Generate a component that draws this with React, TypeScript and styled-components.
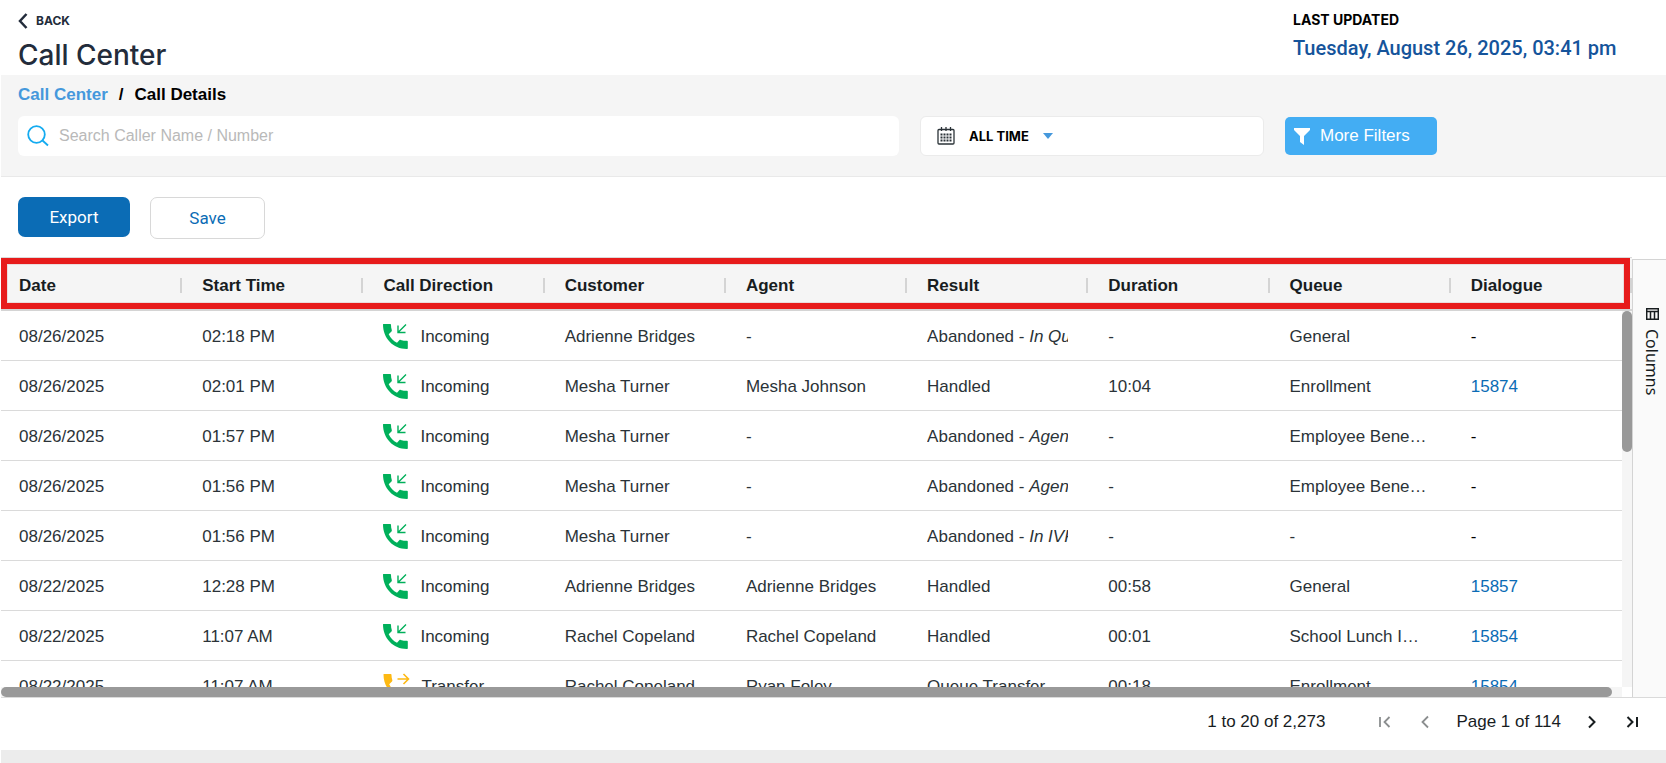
import React from "react";
import styled, { createGlobalStyle, css } from "styled-components";

const Global = createGlobalStyle`
  *, *::before, *::after { box-sizing: border-box; }
  html, body { margin: 0; padding: 0; background: #fff; }
  button, input, select { font: inherit; }
`;

const sans = `"Liberation Sans", Arial, sans-serif`;
const brand = `Roboto, "Open Sans", sans-serif`;
const label = `Inter, "Open Sans", sans-serif`;

const Page = styled.div`
  display: flex;
  flex-direction: column;
  height: 100vh;
  min-height: 480px;
  padding-left: 1px;
  overflow: hidden;
  font-family: ${sans};
  font-size: 17px;
  color: #2b3338;
`;

const Header = styled.header`
  display: flex;
  justify-content: space-between;
  flex: none;
  height: 75px;
  padding: 10px 48px 0 17px;
`;

const BackLink = styled.a`
  display: flex;
  align-items: center;
  gap: 8px;
  height: 22px;
  font: 700 12px/22px ${label};
  color: #232c3b;
  text-decoration: none;
`;

const Title = styled.h1`
  margin: 5px 0 0;
  font: 500 28px/36px ${label};
  color: #232c3b;
`;

const Updated = styled.div`
  width: 325px;
  white-space: nowrap;
`;

const UpdatedLabel = styled.div`
  font: 700 14px/20px ${label};
  color: #000;
`;

const UpdatedValue = styled.div`
  margin-top: 6px;
  font: 500 20px/24px ${brand};
  color: #15549b;
`;

const Filters = styled.section`
  flex: none;
  height: 102px;
  padding: 8px 17px 0;
  background: #f5f5f5;
  border-bottom: 1px solid #e9e9e9;
`;

const Crumbs = styled.nav`
  display: flex;
  gap: 11px;
  height: 24px;
  font-size: 17px;
  line-height: 24px;
  font-weight: 700;
  color: #000;
  a { color: #4598dc; text-decoration: none; }
`;

const FilterRow = styled.div`
  display: grid;
  grid-template-columns: 881fr 344fr 152px 191fr;
  column-gap: 21px;
  align-items: center;
  margin-top: 9px;
`;

const SearchBox = styled.label`
  display: flex;
  align-items: center;
  gap: 10px;
  height: 40px;
  padding: 0 9px;
  background: #fff;
  border-radius: 6px;
  input {
    flex: 1;
    min-width: 0;
    border: 0;
    outline: 0;
    padding: 0;
    background: transparent;
    font-size: 16px;
    color: #2b3338;
  }
  input::placeholder { color: #b9b9b9; opacity: 1; }
`;

const DateButton = styled.button`
  display: flex;
  align-items: center;
  gap: 14px;
  height: 40px;
  padding: 0 16px;
  border: 1px solid #ebebeb;
  border-radius: 6px;
  background: #fff;
  font: 700 13px/20px ${label};
  color: #000;
`;

const MoreButton = styled.button`
  display: flex;
  align-items: center;
  gap: 10px;
  height: 38px;
  padding: 0 9px;
  border: 0;
  border-radius: 5px;
  background: #43adf3;
  font-size: 17px;
  color: #fff;
  white-space: nowrap;
`;

const Actions = styled.div`
  display: flex;
  align-items: flex-start;
  gap: 20px;
  flex: none;
  height: 80px;
  padding: 20px 17px 0;
`;

const ActionButton = styled.button<{ $primary?: boolean }>`
  height: 42px;
  width: 115px;
  border: 1px solid #d8d8d8;
  border-radius: 7px;
  background: #fff;
  font: 400 17px/24px ${brand};
  color: #0b6cb5;
  ${(p) =>
    p.$primary &&
    css`
      height: 40px;
      width: 112px;
      border: 0;
      background: #0b6cb5;
      color: #fff;
    `}
`;

const Grid = styled.main`
  display: flex;
  flex: 1;
  min-height: 0;
  border-bottom: 1px solid #dadada;
`;

const Viewport = styled.div`
  position: relative;
  flex: 1;
  min-width: 0;
  overflow: hidden;
`;

const Highlight = styled.div`
  position: absolute;
  top: 1px;
  left: 0;
  right: 2px;
  height: 51px;
  border: 6px solid #e71b1b;
  box-shadow: inset 0 0 0 1px #eadcdc;
  pointer-events: none;
`;

const Table = styled.table`
  width: 100%;
  table-layout: fixed;
  border-collapse: separate;
  border-spacing: 0;
`;

const HeadCell = styled.th`
  height: 54px;
  padding: 3px 0 0;
  background: #f5f5f5;
  border-top: 1px solid #dadada;
  border-bottom: 2px solid #d4d4d4;
  text-align: left;
  font-weight: 700;
  color: #181d1f;
  & > span {
    display: block;
    height: 15px;
    line-height: 15px;
    padding-left: 20px;
    border-right: 2px solid #d4d4d4;
  }
  &:first-child > span { padding-left: 18px; }
`;

const Cell = styled.td`
  height: 50px;
  padding: 2px 20px 0;
  border-bottom: 1px solid #dadada;
  line-height: 24px;
  white-space: nowrap;
  overflow: hidden;
  text-overflow: ellipsis;
  &:first-child { padding-left: 18px; }
  &:last-child { color: #000; }
  a { color: #0b6cb5; text-decoration: none; }
`;

const Clip = styled.div`
  overflow: hidden;
`;

const Direction = styled.div`
  display: flex;
  align-items: center;
  gap: 11px;
`;

const VTrack = styled.div`
  position: absolute;
  top: 54px;
  right: 0;
  bottom: 10px;
  width: 10px;
  background: #f5f5f5;
`;

const VThumb = styled.div`
  height: 141px;
  border-radius: 5px;
  background: #999;
`;

const HTrack = styled.div`
  position: absolute;
  left: 0;
  right: 0;
  bottom: 0;
  height: 10px;
  padding-right: 20px;
  background: linear-gradient(to left, #fff 10px, #f5f5f5 10px);
`;

const HThumb = styled.div`
  height: 10px;
  border-radius: 5px;
  background: #999;
`;

const SideBar = styled.aside`
  flex: none;
  width: 34px;
  margin-top: 2px;
  padding-top: 41px;
  border-left: 1px solid #d4d4d4;
  border-top: 1px solid #d4d4d4;
  background: #fafafa;
`;

const SideTab = styled.button`
  display: flex;
  align-items: center;
  gap: 9px;
  width: 33px;
  padding: 7px 3px 8px 8px;
  border: 0;
  background: transparent;
  writing-mode: vertical-rl;
  font: 400 16px/22px "Noto Sans", "Open Sans", sans-serif;
  color: #181d1f;
`;

const Pager = styled.nav`
  display: flex;
  align-items: center;
  justify-content: flex-end;
  flex: none;
  height: 52px;
  padding: 0 24px 4px 0;
  color: #181d1f;
`;

const Summary = styled.span`
  margin-right: 50px;
`;

const PageText = styled.span`
  margin: 0 21px;
`;

const PagerButton = styled.button<{ $gap?: boolean }>`
  display: flex;
  padding: 0;
  border: 0;
  background: transparent;
  color: #181d1f;
  margin-left: ${(p) => (p.$gap ? "20px" : "0")};
  &:disabled { color: #8b8e8f; }
`;

const BottomStrip = styled.footer`
  flex: none;
  height: 13px;
  background: #ececec;
`;

const PhoneIcon = ({ transfer }: { transfer?: boolean }) => (
  <svg width={transfer ? 27 : 26} height="28" viewBox="0 0 26 28" overflow="visible" aria-hidden="true">
    <path
      fill={transfer ? "#fdb913" : "#00b05b"}
      d="M0 1.500C0 1 .5 1 1 1h6c.7 0 1 .4 1 1 0 1.800.2 3.400.8 5 .2.500 0 1-.3 1.400L5.700 11.200c2 4 4.500 6.600 8.300 8.600l2.300-2.500c.4-.5.900-.6 1.400-.4 2 .6 4 .8 6.300.8.500 0 .8.300.8.800V25c0 .6-.3 1-1 1C10 26 0 15 0 1.500z"
    />
    {transfer ? (
      <path d="M14 6h11M20 1l5 5-5 5" fill="none" stroke="#fdb913" strokeWidth="1.600" />
    ) : (
      <path d="M23 1.500l-7.500 7.500M15 2.500V9.500H22.500" fill="none" stroke="#00b05b" strokeWidth="1.400" />
    )}
  </svg>
);

type Row = {
  date: string;
  time: string;
  transfer?: boolean;
  customer: string;
  agent: string;
  result: string;
  reason?: string;
  duration: string;
  queue: string;
  dialogue?: string;
};

const rows: Row[] = [
  { date: "08/26/2025", time: "02:18 PM", customer: "Adrienne Bridges", agent: "-", result: "Abandoned", reason: "In Queue", duration: "-", queue: "General" },
  { date: "08/26/2025", time: "02:01 PM", customer: "Mesha Turner", agent: "Mesha Johnson", result: "Handled", duration: "10:04", queue: "Enrollment", dialogue: "15874" },
  { date: "08/26/2025", time: "01:57 PM", customer: "Mesha Turner", agent: "-", result: "Abandoned", reason: "Agent", duration: "-", queue: "Employee Benefits" },
  { date: "08/26/2025", time: "01:56 PM", customer: "Mesha Turner", agent: "-", result: "Abandoned", reason: "Agent", duration: "-", queue: "Employee Benefits" },
  { date: "08/26/2025", time: "01:56 PM", customer: "Mesha Turner", agent: "-", result: "Abandoned", reason: "In IVR", duration: "-", queue: "-" },
  { date: "08/22/2025", time: "12:28 PM", customer: "Adrienne Bridges", agent: "Adrienne Bridges", result: "Handled", duration: "00:58", queue: "General", dialogue: "15857" },
  { date: "08/22/2025", time: "11:07 AM", customer: "Rachel Copeland", agent: "Rachel Copeland", result: "Handled", duration: "00:01", queue: "School Lunch Improvement", dialogue: "15854" },
  { date: "08/22/2025", time: "11:07 AM", transfer: true, customer: "Rachel Copeland", agent: "Ryan Foley", result: "Queue Transfer", duration: "00:18", queue: "Enrollment", dialogue: "15854" },
];

const headings = ["Date", "Start Time", "Call Direction", "Customer", "Agent", "Result", "Duration", "Queue", "Dialogue"];

export default function App() {
  return (
    <Page>
      <Global />
      <Header>
        <div>
          <BackLink href="#back">
            <svg width="10" height="16" viewBox="0 0 10 16" fill="none" stroke="currentColor" strokeWidth="2.500" aria-hidden="true">
              <path d="M8.500 1L2 8l6.500 7" />
            </svg>
            BACK
          </BackLink>
          <Title>Call Center</Title>
        </div>
        <Updated>
          <UpdatedLabel>LAST UPDATED</UpdatedLabel>
          <UpdatedValue>Tuesday, August 26, 2025, 03:41 pm</UpdatedValue>
        </Updated>
      </Header>

      <Filters>
        <Crumbs aria-label="Breadcrumb">
          <a href="#call-center">Call Center</a>
          <span>/</span>
          <span>Call Details</span>
        </Crumbs>
        <FilterRow>
          <SearchBox>
            <svg width="22" height="22" viewBox="0 0 22 22" fill="none" stroke="#14abf0" strokeWidth="1.800" aria-hidden="true">
              <circle cx="9.500" cy="9.500" r="8.300" />
              <path d="M15.500 15.500l5.500 5" />
            </svg>
            <input type="text" placeholder="Search Caller Name / Number" aria-label="Search Caller Name / Number" />
          </SearchBox>
          <DateButton type="button">
            <svg width="18" height="18" viewBox="0 0 18 18" fill="none" stroke="#2b3338" aria-hidden="true">
              <rect x="1" y="2.500" width="16" height="14.500" rx="1" strokeWidth="1.300" />
              <path d="M4.500 0v4M9 0v4M13.500 0v4" strokeWidth="1.300" />
              <path d="M3.500 7.500h11M3.500 10.500h11M3.500 13.500h11" strokeWidth="2" strokeDasharray="2 1" />
            </svg>
            ALL TIME
            <svg width="10" height="6" viewBox="0 0 10 6" aria-hidden="true">
              <path d="M0 0h10L5 6z" fill="#4598dc" />
            </svg>
          </DateButton>
          <MoreButton type="button">
            <svg width="16" height="17" viewBox="0 0 16 17" aria-hidden="true">
              <path d="M0 0h16v2l-6 6v9l-4-3V8L0 2z" fill="#fff" />
            </svg>
            More Filters
          </MoreButton>
        </FilterRow>
      </Filters>

      <Actions>
        <ActionButton type="button" $primary>Export</ActionButton>
        <ActionButton type="button">Save</ActionButton>
      </Actions>

      <Grid>
        <Viewport>
          <Table>
            <thead>
              <tr>
                {headings.map((h) => (
                  <HeadCell key={h} scope="col"><span>{h}</span></HeadCell>
                ))}
              </tr>
            </thead>
            <tbody>
              {rows.map((r, i) => (
                <tr key={i}>
                  <Cell>{r.date}</Cell>
                  <Cell>{r.time}</Cell>
                  <Cell>
                    <Direction>
                      <PhoneIcon transfer={r.transfer} />
                      {r.transfer ? "Transfer" : "Incoming"}
                    </Direction>
                  </Cell>
                  <Cell>{r.customer}</Cell>
                  <Cell>{r.agent}</Cell>
                  <Cell>
                    <Clip>
                      {r.result}
                      {r.reason && <> - <em>{r.reason}</em></>}
                    </Clip>
                  </Cell>
                  <Cell>{r.duration}</Cell>
                  <Cell>{r.queue}</Cell>
                  <Cell>{r.dialogue ? <a href={`#dialogue-${r.dialogue}`}>{r.dialogue}</a> : "-"}</Cell>
                </tr>
              ))}
            </tbody>
          </Table>
          <VTrack><VThumb /></VTrack>
          <HTrack><HThumb /></HTrack>
          <Highlight />
        </Viewport>
        <SideBar>
          <SideTab type="button">
            <svg width="13" height="12" viewBox="0 0 13 12" fill="none" stroke="currentColor" strokeWidth="1.500" aria-hidden="true">
              <path d="M.7.700h11.600v10.600H.7zM.7 3.500h11.600M4.500 3.500v7.800M8.500 3.500v7.800" />
            </svg>
            Columns
          </SideTab>
        </SideBar>
      </Grid>

      <Pager aria-label="Pagination">
        <Summary>1 to 20 of 2,273</Summary>
        <PagerButton type="button" disabled aria-label="First page">
          <svg width="20" height="20" viewBox="0 0 20 20" fill="none" stroke="currentColor" strokeWidth="1.800">
            <path d="M5 5v10M14.500 5l-5 5 5 5" />
          </svg>
        </PagerButton>
        <PagerButton type="button" disabled $gap aria-label="Previous page">
          <svg width="20" height="20" viewBox="0 0 20 20" fill="none" stroke="currentColor" strokeWidth="1.800">
            <path d="M13 4.500l-5.500 5.500 5.500 5.500" />
          </svg>
        </PagerButton>
        <PageText>Page 1 of 114</PageText>
        <PagerButton type="button" aria-label="Next page">
          <svg width="20" height="20" viewBox="0 0 20 20" fill="none" stroke="currentColor" strokeWidth="2">
            <path d="M7 4.500l5.500 5.500L7 15.500" />
          </svg>
        </PagerButton>
        <PagerButton type="button" $gap aria-label="Last page">
          <svg width="20" height="20" viewBox="0 0 20 20" fill="none" stroke="currentColor" strokeWidth="2">
            <path d="M15 5v10M5.500 5l5 5-5 5" />
          </svg>
        </PagerButton>
      </Pager>
      <BottomStrip />
    </Page>
  );
}
